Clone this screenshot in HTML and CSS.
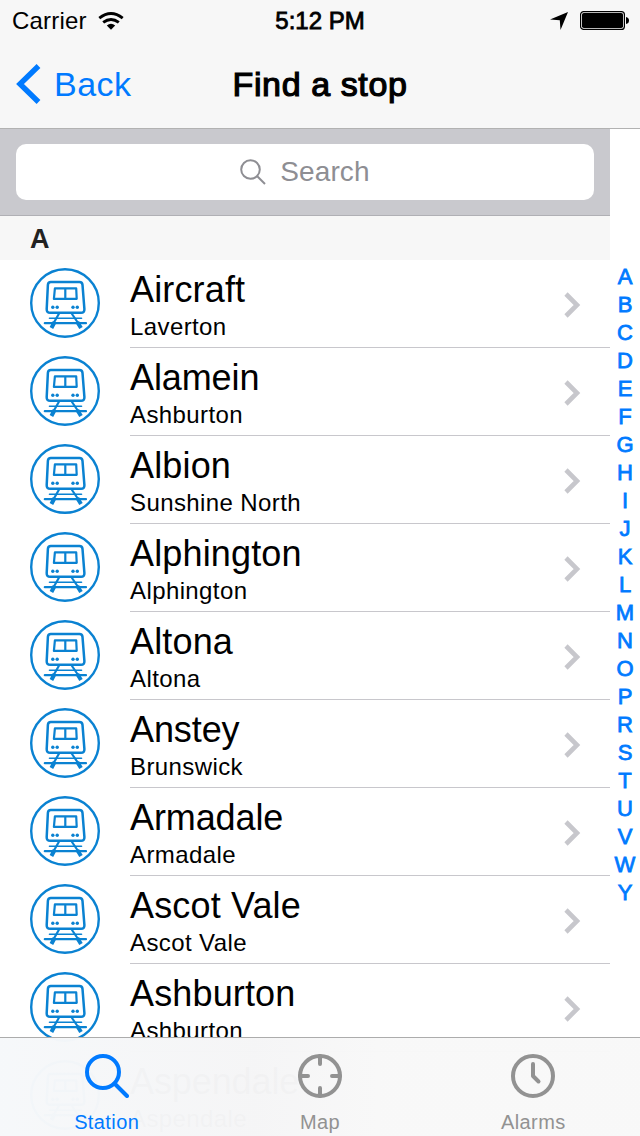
FILE: index.html
```
<!DOCTYPE html>
<html lang="en">
<head>
<meta charset="utf-8">
<title>Find a stop</title>
<link rel="stylesheet" href="styles.css">
</head>
<body>
<svg class="defs" aria-hidden="true">
  <symbol id="train" viewBox="0 0 70 70">
    <g fill="none" stroke="#0a82d2" stroke-linecap="round" stroke-linejoin="round">
      <circle cx="35" cy="35" r="33.8" stroke-width="2.4"/>
      <path stroke-width="2.500" d="M20.800 14H49.500Q52.300 14 52.500 16.800L54.400 41Q54.600 44.800 51 44.800H20.200Q16.500 44.800 16.700 41L17.900 16.800Q18.100 14 20.800 14Z"/>
      <path stroke-width="2.200" d="M24.900 20.300H46.200L46.700 30.900H23.900ZM35.300 20.500V30.500"/>
      <path stroke-width="1.600" d="M19.500 50.300H51.500"/>
      <path stroke-width="2.200" d="M14.800 55.200H56"/>
      <path stroke-width="2.200" d="M28.800 46L22.200 57.500M42 46L49.800 57.500"/>
      <path stroke-width="4" stroke-linecap="butt" d="M24.600 54L21.400 60M47.300 54L51 60"/>
    </g>
    <g fill="#0a82d2"><circle cx="22.800" cy="39.300" r="1.700"/><circle cx="27.200" cy="39.300" r="1.700"/><circle cx="43" cy="39.300" r="1.700"/><circle cx="47.300" cy="39.300" r="1.700"/></g>
  </symbol>
  <symbol id="chevron" viewBox="0 0 18 26">
    <path d="M2 2L13 13L2 24" fill="none" stroke="#c7c7cc" stroke-width="4.600"/>
  </symbol>
</svg>
<div class="screen">
  <header class="header">
    <div class="status">
      <div class="carrier"><span>Carrier</span>
        <svg width="26" height="19" viewBox="0 0 26 19" fill="none" stroke="#000" stroke-width="2.900"><path d="M1.300 6.200Q13-3 24.700 6.200"/><path d="M5.200 10.400Q13 4.400 20.800 10.400"/><path d="M8.800 13.400Q13 10.200 17.200 13.400L13 17.800Z" fill="#000" stroke="none"/></svg>
      </div>
      <span class="time">5:12 PM</span>
      <div class="indicators">
        <svg width="18" height="18" viewBox="0 0 18 18"><path d="M18 0L10.500 18L9.800 8.300L0 7.600Z"/></svg>
        <svg width="49" height="20" viewBox="0 0 49 20"><rect x=".600" y=".600" width="43.800" height="17.800" rx="3" fill="none" stroke="#000" stroke-width="1.200"/><rect x="2" y="2" width="41" height="15" rx="1.800"/><path d="M46 6Q49 6.500 49 9.500T46 13Z"/></svg>
      </div>
    </div>
    <nav class="nav">
      <a class="back"><svg width="25" height="40" viewBox="0 0 25 40"><path d="M22.500 2L4 20L22.500 38" fill="none" stroke="#007aff" stroke-width="5.400"/></svg><span>Back</span></a>
      <h1 class="title">Find a stop</h1>
    </nav>
  </header>
  <main class="content">
    <div class="stops">
      <div class="search"><div class="field">
        <svg width="26" height="26" viewBox="0 0 26 26" fill="none" stroke="#8e8e93" stroke-width="2"><circle cx="10.500" cy="10.500" r="9.300"/><path d="M17 17L25 25"/></svg>
        <span>Search</span></div></div>
      <h2 class="section">A</h2>
      <ul class="list">
        <li class="row"><svg class="train"><use href="#train"/></svg><div class="cell"><div class="text"><div class="name">Aircraft</div><div class="suburb">Laverton</div></div><svg class="chevron"><use href="#chevron"/></svg></div></li>
        <li class="row"><svg class="train"><use href="#train"/></svg><div class="cell"><div class="text"><div class="name tight">Alamein</div><div class="suburb">Ashburton</div></div><svg class="chevron"><use href="#chevron"/></svg></div></li>
        <li class="row"><svg class="train"><use href="#train"/></svg><div class="cell"><div class="text"><div class="name">Albion</div><div class="suburb">Sunshine North</div></div><svg class="chevron"><use href="#chevron"/></svg></div></li>
        <li class="row"><svg class="train"><use href="#train"/></svg><div class="cell"><div class="text"><div class="name">Alphington</div><div class="suburb">Alphington</div></div><svg class="chevron"><use href="#chevron"/></svg></div></li>
        <li class="row"><svg class="train"><use href="#train"/></svg><div class="cell"><div class="text"><div class="name">Altona</div><div class="suburb">Altona</div></div><svg class="chevron"><use href="#chevron"/></svg></div></li>
        <li class="row"><svg class="train"><use href="#train"/></svg><div class="cell"><div class="text"><div class="name tight">Anstey</div><div class="suburb">Brunswick</div></div><svg class="chevron"><use href="#chevron"/></svg></div></li>
        <li class="row"><svg class="train"><use href="#train"/></svg><div class="cell"><div class="text"><div class="name tight">Armadale</div><div class="suburb">Armadale</div></div><svg class="chevron"><use href="#chevron"/></svg></div></li>
        <li class="row"><svg class="train"><use href="#train"/></svg><div class="cell"><div class="text"><div class="name">Ascot Vale</div><div class="suburb">Ascot Vale</div></div><svg class="chevron"><use href="#chevron"/></svg></div></li>
        <li class="row"><svg class="train"><use href="#train"/></svg><div class="cell"><div class="text"><div class="name">Ashburton</div><div class="suburb">Ashburton</div></div><svg class="chevron"><use href="#chevron"/></svg></div></li>
        <li class="row"><svg class="train"><use href="#train"/></svg><div class="cell"><div class="text"><div class="name tight">Aspendale</div><div class="suburb">Aspendale</div></div></div></li>
      </ul>
    </div>
    <div class="index">
      <span>A</span><span>B</span><span>C</span><span>D</span><span>E</span><span>F</span><span>G</span><span>H</span><span>I</span><span>J</span><span>K</span><span>L</span><span>M</span><span>N</span><span>O</span><span>P</span><span>R</span><span>S</span><span>T</span><span>U</span><span>V</span><span>W</span><span>Y</span>
    </div>
  </main>
  <footer class="tabs">
    <a class="tab active"><svg width="44" height="44" viewBox="0 0 44 44"><circle cx="18" cy="18" r="16"/><path d="M29.500 29.500L42 42" stroke-linecap="round"/></svg><span>Station</span></a>
    <a class="tab"><svg width="44" height="44" viewBox="0 0 44 44"><circle cx="22" cy="22" r="20"/><path d="M22 2V10M22 34V42M2 22H10M34 22H42" stroke-linecap="round"/></svg><span>Map</span></a>
    <a class="tab"><svg width="44" height="44" viewBox="0 0 44 44"><circle cx="22" cy="22" r="20"/><path d="M22 10V22L27.500 27.500" stroke-linecap="round" stroke-linejoin="round"/></svg><span>Alarms</span></a>
  </footer>
</div>
</body>
</html>
```
FILE: styles.css
```
* { box-sizing: border-box; margin: 0; padding: 0; }
body { font-family: "Liberation Sans", Arial, sans-serif; background: #fff; color: #000; }
svg { display: block; flex: none; }
.defs { width: 0; height: 0; position: absolute; }
.screen { position: relative; width: 640px; height: 1136px; overflow: hidden; display: flex; flex-direction: column; }
.header { flex: none; height: 129px; background: #f7f7f7; border-bottom: 1px solid #b2b2b2; }
.status { height: 42px; padding: 0 12px; display: grid; grid-template-columns: 1fr auto 1fr; align-items: center; font-size: 24px; line-height: 42px; }
.carrier { display: flex; align-items: center; gap: 11px; letter-spacing: .2px; }
.time { -webkit-text-stroke: .8px #000; }
.indicators { display: flex; justify-content: flex-end; align-items: center; gap: 12px; margin-right: -1px; }
.nav { height: 84px; display: grid; grid-template-columns: 1fr auto 1fr; align-items: center; font-size: 34px; line-height: 60px; }
.back { display: flex; align-items: center; gap: 13px; padding-left: 16px; color: #007aff; letter-spacing: .5px; }
.title { font-size: 34px; font-weight: 400; letter-spacing: .6px; -webkit-text-stroke: 1.2px #000; }
.content { flex: 1; min-height: 0; display: flex; }
.stops { width: 610px; }
.search { height: 87px; padding: 15px 16px; background: #c9c9ce; border-bottom: 1px solid #b0b0b5; }
.field { height: 56px; border-radius: 10px; background: #fff; display: flex; justify-content: center; align-items: center; gap: 14px; color: #8e8e93; font-size: 28px; letter-spacing: .1px; }
.section { height: 44px; padding-left: 30px; background: #f7f7f7; color: #222; font-size: 27px; line-height: 47px; }
.list { list-style: none; }
.row { height: 88px; display: flex; padding-left: 30px; }
.train { width: 70px; height: 70px; margin: 8px 30px 0 0; }
.cell { flex: 1; display: flex; justify-content: space-between; border-bottom: 1px solid #c8c7cc; }
.text { padding-top: 9px; white-space: nowrap; }
.name { font-size: 36px; line-height: 42px; letter-spacing: .15px; }
.tight { letter-spacing: -.1px; }
.suburb { font-size: 24px; line-height: 32px; letter-spacing: .4px; }
.chevron { width: 18px; height: 26px; margin: 31.5px 28.5px 0 0; }
.index { width: 30px; padding-top: 134px; display: flex; flex-direction: column; align-items: center; color: #007aff; font-size: 22px; line-height: 28px; -webkit-text-stroke: .8px #007aff; }
.tabs { position: absolute; left: 0; right: 0; bottom: 0; height: 99px; display: flex; padding-top: 16px; background: linear-gradient(90deg, rgba(246,248,250,.985), rgba(245,245,246,.985) 40%, rgba(248,248,248,.985) 60%); border-top: 1px solid #acacac; }
.tab { flex: 1; display: flex; flex-direction: column; align-items: center; gap: 9px; color: #929292; font-size: 20px; line-height: 30px; letter-spacing: .4px; }
.tab svg { fill: none; stroke: currentColor; stroke-width: 4; }
.active { color: #007aff; }
```
